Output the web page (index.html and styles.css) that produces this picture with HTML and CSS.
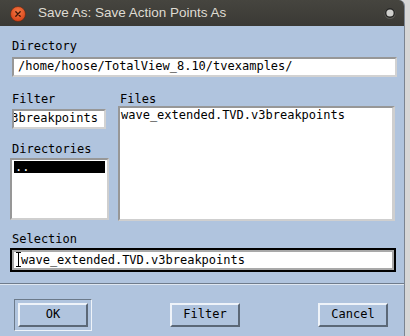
FILE: index.html
```html
<!DOCTYPE html>
<html lang="en">
<head>
    <meta charset="UTF-8">
    <title>Save As: Save Action Points As</title>
    <link rel="stylesheet" href="styles.css">
</head>
<body>

<div class="window">
    <!-- window title bar -->
    <div class="titlebar">
        <svg class="close-btn" width="16" height="16" viewBox="0 0 16 16">
            <defs>
                <radialGradient id="orange" cx="50%" cy="35%" r="60%">
                    <stop offset="0" stop-color="#f57a45"/>
                    <stop offset="1" stop-color="#d9461b"/>
                </radialGradient>
            </defs>
            <circle cx="8" cy="8" r="7.5" fill="url(#orange)" stroke="#5a2a14" stroke-width="0.6"/>
            <path d="M5.8 5.8 L10.2 10.2 M10.2 5.8 L5.8 10.2" stroke="#3b1608" stroke-width="1.3" stroke-linecap="round"/>
        </svg>
        <span class="title">Save As: Save Action Points As</span>
        <svg class="menu-dot" width="12" height="12" viewBox="0 0 12 12">
            <circle cx="6" cy="6.5" r="5.5" fill="#5c5b57"/>
            <circle cx="6" cy="6" r="5" fill="#262624"/>
            <circle cx="6" cy="6" r="3.6" fill="#cfcfcc"/>
        </svg>
    </div>

    <div class="dialog">
        <div class="label">Directory</div>
        <div class="field field-dir">/home/hoose/TotalView_8.10/tvexamples/</div>

        <div class="middle">
            <div class="left-col">
                <div class="label">Filter</div>
                <div class="field field-filter"><span>*.v3breakpoints</span></div>
                <div class="label label-dirs">Directories</div>
                <div class="list list-dirs">
                    <div class="row selected">..</div>
                </div>
            </div>
            <div class="right-col">
                <div class="label label-files">Files</div>
                <div class="list list-files">
                    <div class="row">wave_extended.TVD.v3breakpoints</div>
                </div>
            </div>
        </div>

        <div class="label label-selection">Selection</div>
        <div class="selection">
            <div class="field field-selection">
                <svg class="caret" width="5" height="15" viewBox="0 0 5 15">
                    <path d="M0 0.5 H5 M2.5 0 V15 M0 14.5 H5" stroke="#000" stroke-width="1"/>
                </svg>wave_extended.TVD.v3breakpoints
            </div>
        </div>
    </div>

    <div class="separator"></div>

    <div class="buttons">
        <div class="default-ring">
            <div class="button">OK</div>
        </div>
        <div class="button">Filter</div>
        <div class="button">Cancel</div>
    </div>
</div>

</body>
</html>
```

FILE: styles.css
```css
body {
    margin: 0;
    background-color: #d6d6d6;
    font-family: "DejaVu Sans Mono", "Liberation Mono", monospace;
    font-size: 12px;
    line-height: 14px;
    color: #000;
}
.window {
    width: 404px;
    height: 336px;
    background-color: #b0c4de;
    border-right: 1px solid #7b8491;
    border-top-right-radius: 6px;
    overflow: hidden;
}

/* title bar */
.titlebar {
    height: 26px;
    display: flex;
    align-items: center;
    padding-left: 10px;
    background: linear-gradient(#46453f, #3a3935);
}
.close-btn {
    flex: none;
    margin-top: 1px;
}
.title {
    margin-left: 12px;
    font-family: "Liberation Sans", Arial, sans-serif;
    font-size: 13.5px;
    color: #dfdbd2;
}
.menu-dot {
    margin-left: auto;
    margin-right: 8px;
}

/* dialog body */
.dialog {
    padding: 13px 7px 0 10px;
}
.label {
    margin-left: 2px;
    height: 14px;
}
.field {
    background-color: #fff;
    border-top: 2px solid #979797;
    border-left: 2px solid #979797;
    border-right: 2px solid #d2d2d2;
    border-bottom: 2px solid #d2d2d2;
    white-space: nowrap;
    overflow: hidden;
}
.field-dir {
    margin: 4px 0 0 2px;
    height: 16px;
    padding-left: 4px;
}
.middle {
    display: flex;
    gap: 9px;
    margin-top: 15px;
}
.left-col {
    width: 99px;
}
.right-col {
    width: 277px;
}
.field-filter {
    margin: 3px 0 0 2px;
    width: 90px;
    height: 16px;
    display: flex;
    justify-content: flex-end;
}
.field-filter span {
    padding-right: 6px;
}
.label-dirs {
    margin-top: 13px;
}
.list {
    background-color: #fff;
    border-top: 2px solid #979797;
    border-left: 2px solid #979797;
    border-right: 2px solid #cfcfcf;
    border-bottom: 2px solid #cfcfcf;
    box-sizing: border-box;
}
.list-dirs {
    margin-top: 2px;
    height: 62px;
    padding: 1px 2px;
}
.list-files {
    height: 115px;
    padding: 1px 1px;
    border-right-width: 3px;
}
.row {
    height: 12px;
    line-height: 13px;
    white-space: nowrap;
}
.row.selected {
    background-color: #000;
    color: #fff;
    padding-left: 1px;
}
.label-selection {
    margin-top: 11px;
}
.selection {
    margin: 2px 1px 0 0;
    border: 2px solid #000;
}
.field-selection {
    height: 16px;
    border: 2px solid #a9a9a9;
    line-height: 16px;
    padding-left: 2px;
}
.caret {
    vertical-align: -3px;
}

/* bottom buttons */
.separator {
    margin-top: 11px;
    height: 1px;
    background-color: #6f7c8c;
    border-bottom: 1px solid #dfe7f1;
}
.buttons {
    display: flex;
    align-items: center;
    justify-content: space-between;
    padding: 14px 16px 0 14px;
}
.default-ring {
    padding: 3px;
    border-top: 1px solid #6c7a8a;
    border-left: 1px solid #6c7a8a;
    border-right: 1px solid #eef3f9;
    border-bottom: 1px solid #eef3f9;
}
.button {
    width: 66px;
    height: 18px;
    padding-top: 2px;
    text-align: center;
    line-height: 14px;
    border-top: 2px solid #eef3f9;
    border-left: 2px solid #eef3f9;
    border-right: 2px solid #5b6877;
    border-bottom: 2px solid #5b6877;
}
```
